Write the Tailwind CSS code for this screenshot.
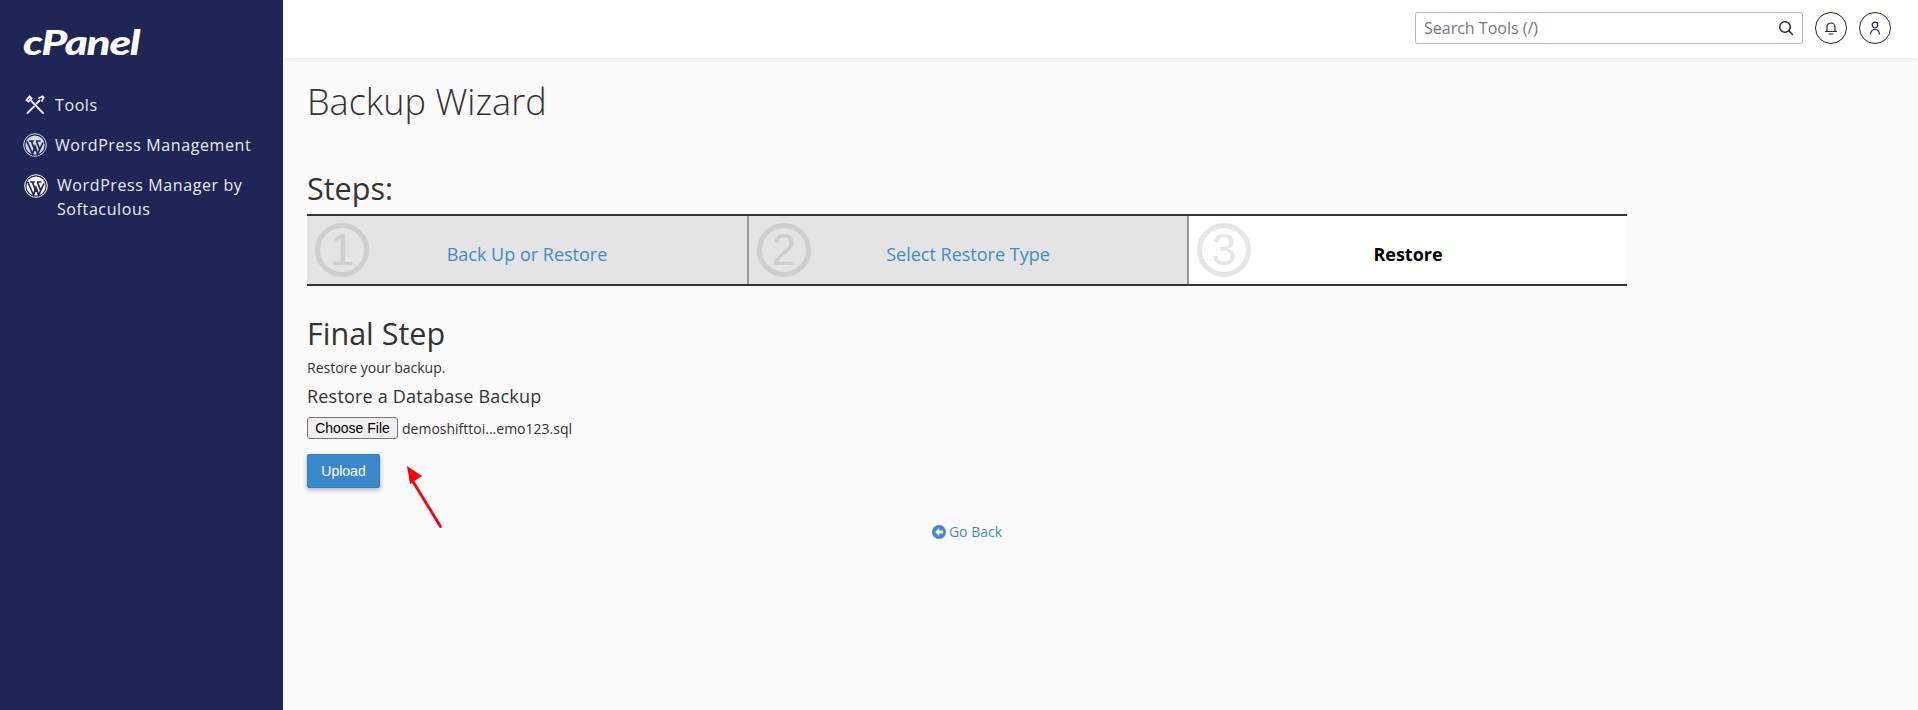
<!DOCTYPE html>
<html lang="en">
<head>
<meta charset="utf-8">
<title>Backup Wizard</title>
<script src="https://cdn.jsdelivr.net/npm/@tailwindcss/browser@4"></script>
</head>
<body class="m-0 bg-[#fafafa] font-['Open_Sans',sans-serif] text-[#333]">
<div class="flex h-[710px] w-[1918px] overflow-hidden">
  <aside class="w-[283px] shrink-0 bg-[#1f2555] text-[#e8ecf4]">
    <div class="h-[85px] pl-[23px] pt-[21px]">
      <div class="origin-left scale-x-[1.3] font-['Lato',sans-serif] text-[34px] font-black italic leading-[42px] tracking-[-1px] text-white">cPanel</div>
    </div>
    <nav class="flex flex-col text-[16px] tracking-[0.6px]">
      <a class="flex h-[40px] items-center pl-[25px]">
        <svg class="mr-[10px] h-[20px] w-[20px]" viewBox="0 0 20 20" fill="none" stroke="#e8ecf4" stroke-width="1.9" stroke-linecap="round"><path d="M2.5 18 L9 11.5"/><path d="M11.5 8.5 L14.5 5.5"/><path d="M14 3 L17.5 1.5 L18.5 2.5 L17 6"/><path d="M5 4.5 L18 18"/><path d="M1.5 5 L4.5 1.5 L6.5 3.5 L3.5 6.5 Z"/></svg>
        <span>Tools</span>
      </a>
      <a class="flex h-[40px] items-center pl-[23px]">
        <svg class="mr-[8px] h-[24px] w-[24px]" viewBox="0 0 24 24"><circle cx="12" cy="12" r="11.3" fill="none" stroke="#d5d8e4" stroke-width="1"/><circle cx="12" cy="12" r="9.6" fill="#d5d8e4"/><path d="M3.8 8 L9.5 21 L12 13.5 L14.6 21 L20 9.5 M6 8 H10.8 M13 8 H17.5 M8.4 8 L12 18 M13.4 8 L16.8 17" fill="none" stroke="#1f2555" stroke-width="1.7"/></svg>
        <span>WordPress Management</span>
      </a>
      <a class="flex items-start pl-[24px] pt-[8px]">
        <svg class="mr-[9px] mt-[1px] h-[24px] w-[24px] shrink-0" viewBox="0 0 24 24"><circle cx="12" cy="12" r="11.3" fill="none" stroke="#fff" stroke-width="1"/><circle cx="12" cy="12" r="9.6" fill="#fff"/><path d="M3.8 8 L9.5 21 L12 13.5 L14.6 21 L20 9.5 M6 8 H10.8 M13 8 H17.5 M8.4 8 L12 18 M13.4 8 L16.8 17" fill="none" stroke="#1f2555" stroke-width="1.7"/></svg>
        <span class="w-[200px] leading-[24px]">WordPress Manager by Softaculous</span>
      </a>
    </nav>
  </aside>
  <div class="flex min-w-0 flex-1 flex-col">
    <header class="flex h-[58px] shrink-0 items-center justify-end bg-white pr-[27px] shadow-[0_1px_4px_rgba(0,0,0,0.08)]">
      <div class="-mt-[2px] flex h-[32px] w-[388px] items-center justify-between rounded-[3px] border border-[#b5b4c9] bg-white pl-[8px] pr-[8px] text-[16px] text-[#77777f]">
        <span>Search Tools (/)</span>
        <svg class="h-[16px] w-[16px]" viewBox="0 0 16 16" fill="none" stroke="#1f2555" stroke-width="1.5" stroke-linecap="round"><circle cx="7" cy="7" r="5.3"/><path d="M11 11 L14.5 14.5"/></svg>
      </div>
      <div class="-mt-[2px] ml-[12px] flex h-[32px] w-[32px] items-center justify-center rounded-full border border-[#1f2555]">
        <svg class="h-[14px] w-[14px]" viewBox="0 0 14 14" fill="none" stroke="#1f2555" stroke-width="1.2" stroke-linecap="round"><path d="M3 10 V6 a4 4 0 0 1 8 0 V10 M1.5 10.5 H12.5 M5 13 H9"/></svg>
      </div>
      <div class="-mt-[2px] ml-[12px] flex h-[32px] w-[32px] items-center justify-center rounded-full border border-[#1f2555]">
        <svg class="h-[14px] w-[14px]" viewBox="0 0 14 14" fill="none" stroke="#1f2555" stroke-width="1.2" stroke-linecap="round"><circle cx="7" cy="4" r="2.8"/><path d="M2.5 13 C3 9.5 5 8.5 7 8.5 S11 9.5 11.5 13"/></svg>
      </div>
    </header>
    <main class="relative flex-1 pl-[24px]">
      <h1 class="mt-[19px] text-[36px] font-light leading-[50px] text-[#333]">Backup Wizard</h1>
      <h2 class="mt-[40px] text-[30.5px] font-normal leading-[42px] text-[#333]">Steps:</h2>
      <div class="mt-[5px] flex h-[72px] w-[1320px] border-y-2 border-[#333]">
        <div class="relative flex w-[442px] border-r-2 border-[#999] bg-[#e4e4e4]">
          <span class="absolute left-[8px] top-[7px] flex h-[54px] w-[54px] items-center justify-center rounded-full border-[5px] border-[#cfcfcf] font-['Liberation_Sans',sans-serif] text-[44px] font-light leading-none text-[#cfcfcf]">1</span>
          <a class="w-full pt-[26px] text-center text-[18px] leading-[24px] text-[#428bca]">Back Up or Restore</a>
        </div>
        <div class="relative flex w-[440px] border-r-2 border-[#999] bg-[#e4e4e4]">
          <span class="absolute left-[8px] top-[7px] flex h-[54px] w-[54px] items-center justify-center rounded-full border-[5px] border-[#cfcfcf] font-['Liberation_Sans',sans-serif] text-[44px] font-light leading-none text-[#cfcfcf]">2</span>
          <a class="w-full pt-[26px] text-center text-[18px] leading-[24px] text-[#428bca]">Select Restore Type</a>
        </div>
        <div class="relative flex w-[438px] bg-white">
          <span class="absolute left-[8px] top-[7px] flex h-[54px] w-[54px] items-center justify-center rounded-full border-[5px] border-[#e6e6e6] font-['Liberation_Sans',sans-serif] text-[44px] font-light leading-none text-[#e6e6e6]">3</span>
          <span class="w-full pt-[26px] text-center text-[18px] font-bold leading-[24px] text-black">Restore</span>
        </div>
      </div>
      <h2 class="mt-[26px] text-[30.5px] font-normal leading-[42px] text-[#333]">Final Step</h2>
      <p class="mt-[4px] text-[14px] leading-[20px]">Restore your backup.</p>
      <h3 class="mt-[6px] text-[18px] font-normal leading-[25px] tracking-[0.2px]">Restore a Database Backup</h3>
      <div class="mt-[8px] flex h-[22px] items-center">
        <span class="flex h-[22px] w-[91px] items-center justify-center rounded-[3px] border border-[#767676] bg-[#efefef] font-['Liberation_Sans',sans-serif] text-[14px] text-black">Choose File</span>
        <span class="ml-[4px] text-[14px] text-[#333]">demoshifttoi...emo123.sql</span>
      </div>
      <button class="mt-[15px] block h-[34px] w-[73px] rounded-[2px] border border-[#357ebd] bg-[#3a87cb] font-['Liberation_Sans',sans-serif] text-[14px] text-white shadow-[0_2px_5px_rgba(0,0,0,0.3)]">Upload</button>
      <div class="mt-[33px] flex w-[1320px] items-center justify-center text-[14px] text-[#428bca]">
        <svg class="mr-[3px] h-[14px] w-[14px]" viewBox="0 0 14 14"><circle cx="7" cy="7" r="7" fill="#428bca"/><path d="M7.2 3 L3.2 7 L7.2 11 V8.5 H11 V5.5 H7.2 Z" fill="#fff"/></svg>
        <span>Go Back</span>
      </div>
      <svg class="absolute left-[110px] top-[400px] h-[80px] w-[60px]" viewBox="0 0 60 80" fill="none"><path d="M47.5 68.5 L19 22" stroke="#fb0007" stroke-width="2.8" stroke-linecap="round"/><path d="M14 8 L29 18 L17 26 Z" fill="#fb0007"/></svg>
    </main>
  </div>
</div>
</body>
</html>
